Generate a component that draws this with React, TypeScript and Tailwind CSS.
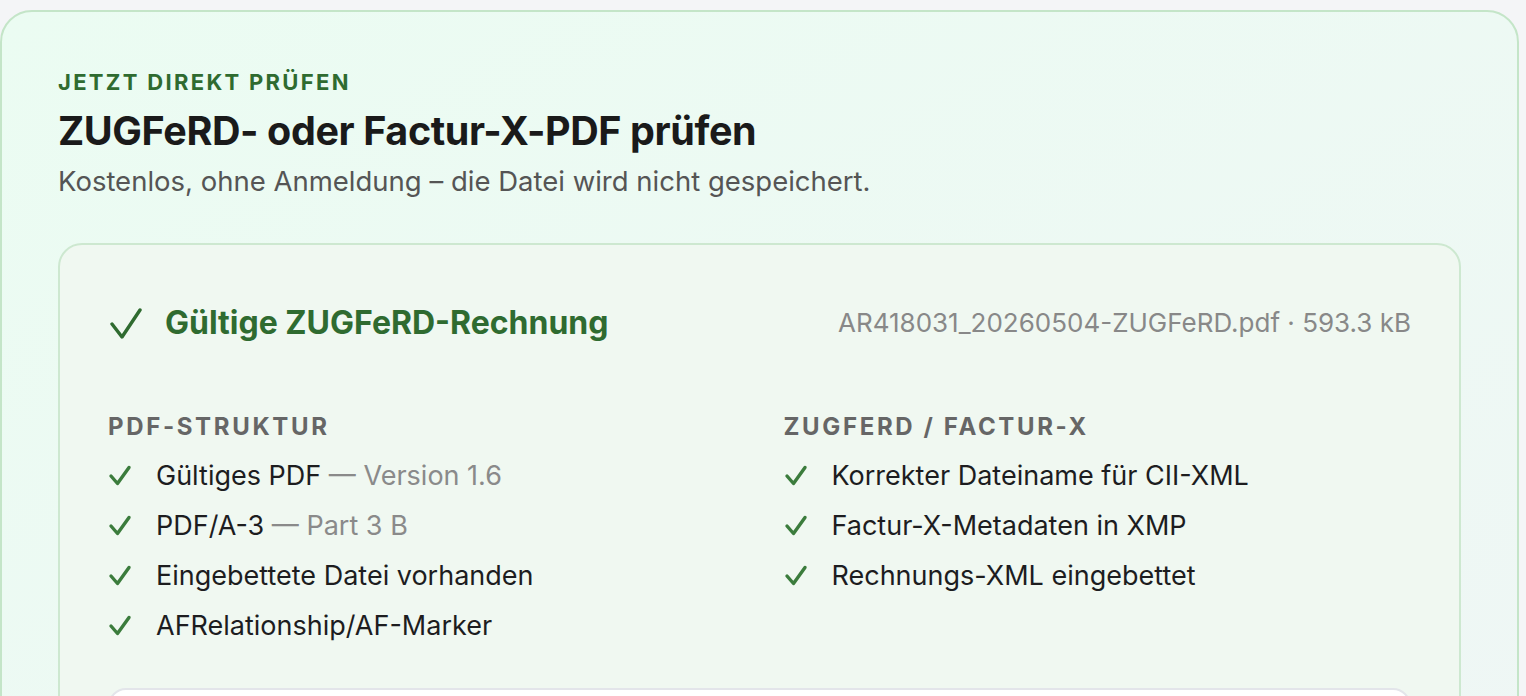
import React from "react";

const font = { fontFamily: "Inter, 'Noto Sans', sans-serif" };

function BigCheck() {
  return (
    <svg width="34" height="32" viewBox="0 0 34 32" className="shrink-0">
      <path d="M3 17 L13 30 L31 3" fill="none" stroke="#2f6b30" strokeWidth="3.4" strokeLinecap="round" strokeLinejoin="round" />
    </svg>
  );
}

function SmallCheck() {
  return (
    <svg width="24" height="22" viewBox="0 0 24 22" className="shrink-0">
      <path d="M3 11 L9.5 18.5 L21 2.5" fill="none" stroke="#3b7c3c" strokeWidth="3.4" strokeLinecap="round" strokeLinejoin="round" />
    </svg>
  );
}

function Item({ text, extra }: { text: string; extra?: string }) {
  return (
    <li className="flex items-center gap-[24px] h-[34px] text-[27px] leading-[34px] text-[#1d1d1f]">
      <SmallCheck />
      <span>
        {text}
        {extra && <span className="text-[#8a8a8a]"> — {extra}</span>}
      </span>
    </li>
  );
}

export default function App() {
  return (
    <div className="min-h-screen bg-[#f4f5f7] pt-[10px] overflow-hidden" style={font}>
      <div className="w-[1519px] rounded-[32px] border-2 border-[#c4e5c8] bg-gradient-to-br from-[#ebfcf2] to-[#eff6f5] pt-[56px] px-[56px] pb-[40px]">
        <div className="text-[22px] leading-[28px] font-bold tracking-[0.105em] uppercase text-[#2f6b30]">
          Jetzt direkt prüfen
        </div>
        <h1 className="mt-[11px] text-[39.5px] leading-[48px] font-bold text-[#1a1a1a] tracking-[-0.01em]">
          ZUGFeRD- oder Factur-X-PDF prüfen
        </h1>
        <p className="mt-[8px] text-[27.5px] leading-[36px] text-[#555555]">
          Kostenlos, ohne Anmeldung – die Datei wird nicht gespeichert.
        </p>

        <div className="mt-[44px] rounded-[24px] border-2 border-[#cde8d0] bg-[#f0f8f1] pt-[58px] px-[48px] pb-[40px]">
          <div className="flex items-center justify-between h-[40px]">
            <div className="flex items-center gap-[22px] pl-[1px]">
              <BigCheck />
              <span className="text-[32px] leading-[40px] font-bold text-[#2f6b30]">Gültige ZUGFeRD-Rechnung</span>
            </div>
            <span className="text-[26px] leading-[40px] text-[#888888]">AR418031_20260504-ZUGFeRD.pdf · 593.3 kB</span>
          </div>

          <div className="mt-[69px] grid grid-cols-2 gap-[48px]">
            <div>
              <div className="text-[24px] leading-[30px] font-bold tracking-[0.11em] uppercase text-[#666666]">PDF-Struktur</div>
              <ul className="mt-[17px] flex flex-col gap-[16px]">
                <Item text="Gültiges PDF" extra="Version 1.6" />
                <Item text="PDF/A-3" extra="Part 3 B" />
                <Item text="Eingebettete Datei vorhanden" />
                <Item text="AFRelationship/AF-Marker" />
              </ul>
            </div>
            <div>
              <div className="text-[24px] leading-[30px] font-bold tracking-[0.11em] uppercase text-[#666666]">ZUGFeRD / Factur-X</div>
              <ul className="mt-[17px] flex flex-col gap-[16px]">
                <Item text="Korrekter Dateiname für CII-XML" />
                <Item text="Factur-X-Metadaten in XMP" />
                <Item text="Rechnungs-XML eingebettet" />
              </ul>
            </div>
          </div>

          <div className="mt-[45px] h-[120px] rounded-[18px] border-2 border-[#e3e5ea] bg-white" />
        </div>
      </div>
    </div>
  );
}
